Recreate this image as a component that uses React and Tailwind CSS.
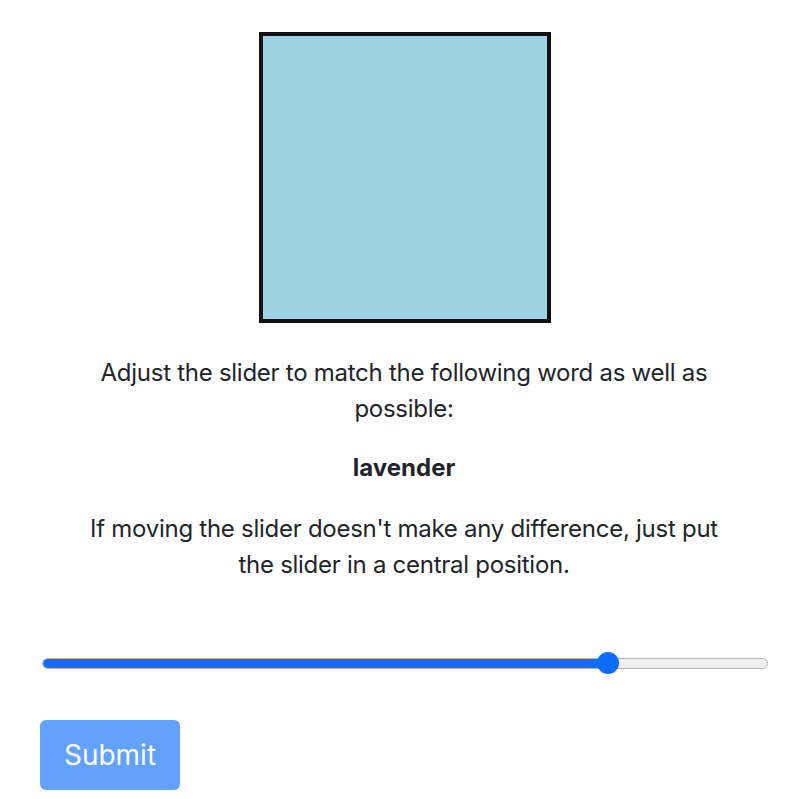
import React, { useState } from 'react';

const App = () => {
  const [value] = useState(78);

  return (
    <div className="min-h-screen w-full bg-white text-[#212529] font-['Inter','Roboto',sans-serif]">
      <div className="pl-10 pr-8 pt-8">
        <div className="flex justify-center">
          <div className="ml-[2px] w-[292px] h-[291px] border-4 border-[#111111] bg-[#9fd3e2]" />
        </div>

        <p className="mt-[32px] text-center text-[24px] leading-[36px] tracking-[-0.27px]">
          Adjust the slider to match the following word as well as <br /> possible:
        </p>

        <p className="mt-[23px] text-center text-[24px] leading-[36px] font-bold">lavender</p>

        <p className="mt-[25px] text-center text-[24px] leading-[36px] tracking-[-0.27px]">
          If moving the slider doesn't make any difference, just put <br /> the slider in a central position.
        </p>

        {/* slider */}
        <div className="mt-[69px] ml-[2px] w-[726px] h-[22px] flex items-center relative">
          <div className="w-full h-[11px] rounded-full bg-[#efefef] border border-[#b5b5b5] overflow-hidden">
            <div className="h-full bg-[#0d6efd] rounded-full" style={{ width: `${value}%` }} />
          </div>
          <div
            className="absolute top-0 w-[22px] h-[22px] -ml-[11px] rounded-full bg-[#0d6efd]"
            style={{ left: `${value}%` }}
          />
        </div>

        <button
          type="button"
          className="mt-[46px] w-[140px] h-[70px] rounded-[6px] bg-[#62a1fe] text-white text-[28px]"
        >
          Submit
        </button>
      </div>
    </div>
  );
};

export default App;
